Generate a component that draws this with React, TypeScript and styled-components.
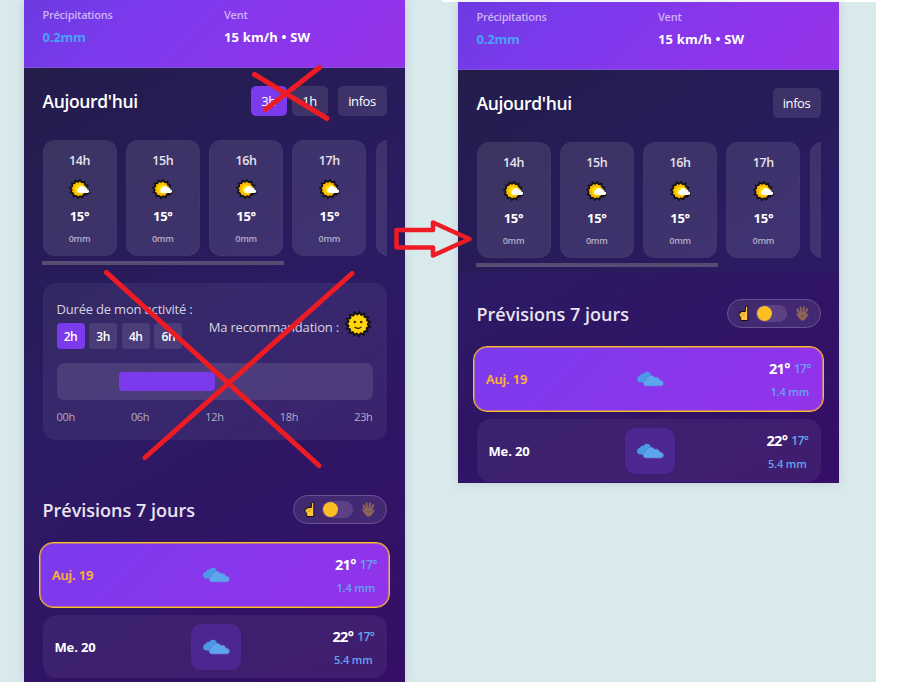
import React from 'react';
import styled, { createGlobalStyle, css } from 'styled-components';

const Global = createGlobalStyle`
  *, *::before, *::after { box-sizing: border-box; }
  body { margin: 0; background: #fff; font-family: 'Open Sans', 'Noto Sans', sans-serif; }
  button { font-family: inherit; padding: 0; border: 0; }
`;

const Page = styled.main`
  position: relative;
  width: 897px;
  height: 682px;
  overflow: hidden;
  background: linear-gradient(#fff, #fff) 442px 0 / 434px 2px no-repeat,
    linear-gradient(90deg, #d9eaed 876px, #fff 876px);
  display: flex;
  align-items: flex-start;
  gap: 53px;
  padding-left: 24px;
`;

const Phone = styled.section<{ $short?: boolean }>`
  width: 381px;
  height: ${p => (p.$short ? 481 : 682)}px;
  margin-top: ${p => (p.$short ? 2 : 0)}px;
  overflow: hidden;
  flex: none;
  display: flex;
  flex-direction: column;
  box-shadow: 0 0 9px rgba(80, 60, 90, 0.17);
`;

const Summary = styled.header`
  height: 68px;
  flex: none;
  display: grid;
  grid-template-columns: 181.5px 1fr;
  padding: 7px 0 0 18.5px;
  background: linear-gradient(135deg, #6b3ae0 0%, #7c3aed 28%, #9333ea 88%);
  border-bottom: 1px solid #8253d8;
`;

const Metric = styled.div`
  display: flex;
  flex-direction: column;
`;

const MetricLabel = styled.span`
  font-size: 11px;
  line-height: 16px;
  font-weight: 600;
  letter-spacing: -0.25px;
  color: #cdb2f7;
`;

const MetricValue = styled.span<{ $rain?: boolean }>`
  margin-top: 5px;
  font-size: 13px;
  line-height: 18px;
  font-weight: 700;
  letter-spacing: ${p => (p.$rain ? -0.2 : 0.15)}px;
  color: ${p => (p.$rain ? '#4ca0fa' : '#fff')};
`;

const backdrop = css`
  background-image: linear-gradient(150deg, #231d4b 0%, #2b1b63 45%, #350e67 100%);
  background-size: 381px 614px;
`;

const Hourly = styled.div<{ $short?: boolean }>`
  ${backdrop}
  height: ${p => (p.$short ? 203 : 215)}px;
  flex: none;
  padding: 18px 18.5px 0;
`;

const SectionHead = styled.div`
  height: 30px;
  display: flex;
  align-items: center;
  justify-content: space-between;
`;

const Title = styled.h2<{ $soft?: boolean }>`
  margin: 0;
  font-size: ${p => (p.$soft ? 18 : 17.5)}px;
  line-height: 26px;
  font-weight: 600;
  letter-spacing: ${p => (p.$soft ? 0 : -0.35)}px;
  color: ${p => (p.$soft ? '#e9e4f0' : '#fff')};
`;

const Actions = styled.div`
  display: flex;
  gap: 5px;
`;

const Tab = styled.button<{ $on?: boolean; $wide?: boolean; $narrow?: boolean }>`
  width: ${p => (p.$narrow ? 48 : p.$wide ? 49 : 36)}px;
  height: 30px;
  margin-left: ${p => (p.$wide ? 5 : 0)}px;
  border-radius: 5px;
  background: ${p => (p.$on ? '#7c3aed' : 'rgba(255,255,255,.1)')};
  color: #fff;
  font-size: 13px;
  letter-spacing: -0.4px;
  line-height: 28px;
`;

const Strip = styled.div`
  margin-top: 24px;
  height: 116px;
  width: 344px;
  overflow: hidden;
  display: flex;
  gap: 9.3px;
`;

const HourCard = styled.article`
  flex: none;
  width: 74px;
  height: 116px;
  border-radius: 12px;
  background: rgba(255, 255, 255, 0.1);
  border: 1px solid rgba(255, 255, 255, 0.02);
  display: flex;
  flex-direction: column;
  align-items: center;
  color: #fff;
`;

const Hour = styled.span`
  margin-top: 10px;
  font-size: 12.5px;
  line-height: 20px;
  font-weight: 600;
  letter-spacing: -0.4px;
  color: #e6e2ee;
`;

const HourIcon = styled.svg`
  width: 22px;
  height: 22px;
  margin: 8px 0 0 1px;
`;

const HourTemp = styled.span`
  margin-top: 5px;
  font-size: 13px;
  line-height: 20px;
  font-weight: 700;
  letter-spacing: -0.3px;
`;

const HourRain = styled.span`
  margin-top: 6px;
  font-size: 9px;
  line-height: 14px;
  font-weight: 600;
  letter-spacing: -0.2px;
  color: #b5aec8;
`;

const Scrollbar = styled.div`
  width: 242px;
  height: 4px;
  margin: 5px 0 0 -0.5px;
  background: #584c74;
`;

const ActivityWrap = styled.div`
  ${backdrop}
  background-position: 0 -215px;
  height: 204px;
  padding: 0 18.5px;
  flex: none;
`;

const Activity = styled.div`
  height: 157px;
  border-radius: 13px;
  background: rgba(255, 255, 255, 0.06);
  padding: 16px 14px 0;
`;

const ActivityTop = styled.div`
  display: flex;
  justify-content: space-between;
`;

const Caption = styled.div`
  font-size: 13px;
  line-height: 20px;
  letter-spacing: -0.19px;
  color: #d8d3e2;
  white-space: nowrap;
`;

const Durations = styled.div`
  display: flex;
  gap: 4.6px;
  margin-top: 4px;
`;

const Duration = styled.button<{ $on?: boolean }>`
  width: 28px;
  height: 26px;
  border-radius: 4px;
  background: ${p => (p.$on ? '#7c3aed' : 'rgba(255,255,255,.1)')};
  color: #fff;
  font-size: 12px;
  font-weight: 600;
  letter-spacing: -0.5px;
`;

const Advice = styled.div`
  display: flex;
  align-items: center;
  height: 30px;
  margin: 13px 0.5px 0 0;
  gap: 5px;
`;

const Face = styled.svg`
  width: 28px;
  height: 28px;
  margin-top: -6px;
`;

const Track = styled.div`
  height: 37px;
  margin-top: 14px;
  border-radius: 7px;
  background: rgba(255, 255, 255, 0.1);
  padding: 9px 0 0 62.5px;
`;

const Span = styled.div`
  width: 96px;
  height: 19px;
  border-radius: 4px;
  background: #7c3aed;
`;

const Scale = styled.div`
  display: flex;
  justify-content: space-between;
  margin-top: 9px;
  font-size: 11px;
  line-height: 16px;
  letter-spacing: -0.35px;
  color: #b3abc6;
`;

const Week = styled.div<{ $short?: boolean }>`
  ${backdrop}
  background-position: 0 ${p => (p.$short ? -401 : -419)}px;
  flex: 1;
  padding: ${p => (p.$short ? 25.5 : 7.5)}px 15px 0;
`;

const WeekHead = styled(SectionHead)`
  padding: 0 3.5px;
`;

const HandToggle = styled.div`
  width: 94px;
  height: 29px;
  border: 1px solid #6b5192;
  border-radius: 15px;
  background: rgba(255, 255, 255, 0.09);
  display: flex;
  align-items: center;
  padding-left: 9px;
`;

const Switch = styled.span`
  width: 31px;
  height: 17px;
  border-radius: 9px;
  background: #5c4285;
  margin: 0 8px 0 5px;
  padding: 1px 1.5px;
  display: block;
`;

const Knob = styled.span`
  display: block;
  width: 15px;
  height: 15px;
  border-radius: 50%;
  background: #fbbf24;
`;

const Hand = styled.svg`
  width: 14px;
  height: 17px;
  flex: none;
`;

const Day = styled.article<{ $today?: boolean }>`
  display: grid;
  grid-template-columns: 1fr 50px 1fr;
  align-items: center;
  height: ${p => (p.$today ? 66 : 63)}px;
  margin: ${p => (p.$today ? '17px 0 0' : '7.5px 3.5px 0')};
  padding: ${p => (p.$today ? '0 12px 0 12px' : '0 12px')};
  border: ${p => (p.$today ? '1px solid #fbbf24' : '0')};
  box-shadow: ${p => (p.$today ? 'inset 0 0 0 1px rgba(251, 191, 36, 0.45)' : 'none')};
  border-radius: 14px;
  background: ${p => (p.$today ? 'linear-gradient(135deg,#7c3aed,#9333ea)' : 'rgba(255,255,255,.06)')};
`;

const DayName = styled.span<{ $today?: boolean }>`
  font-size: 13px;
  font-weight: ${p => (p.$today ? 600 : 700)};
  letter-spacing: ${p => (p.$today ? -0.15 : -0.15)}px;
  color: ${p => (p.$today ? '#fbb927' : '#fff')};
  -webkit-text-stroke: ${p => (p.$today ? '0.2px' : '0')};
`;

const IconTile = styled.div<{ $today?: boolean }>`
  width: 50px;
  height: 46px;
  margin-left: 1px;
  border-radius: 10px;
  background: ${p => (p.$today ? 'transparent' : '#4c278f')};
  display: grid;
  place-items: center;
`;

const CloudIcon = styled.svg`
  width: 28px;
  height: 16px;
`;

const Figures = styled.div`
  display: flex;
  flex-direction: column;
  align-items: flex-end;
  padding-top: 1px;
`;

const Temps = styled.div`
  display: flex;
  gap: 4px;
  line-height: 20px;
`;

const High = styled.span`
  font-size: 14.5px;
  font-weight: 700;
  letter-spacing: -0.75px;
  color: #fff;
`;

const Low = styled.span`
  font-size: 12px;
  font-weight: 600;
  line-height: 19px;
  letter-spacing: -0.5px;
  color: #62a5ee;
`;

const Rain = styled.span`
  margin: 5px 2px 0 0;
  font-size: 11px;
  line-height: 16px;
  font-weight: 600;
  letter-spacing: -0.15px;
  color: #62a5ee;
`;

const Markup = styled.svg`
  position: absolute;
  left: 0;
  top: 0;
  width: 897px;
  height: 682px;
  pointer-events: none;
`;

const star = (c: number, outer: number, inner: number, n: number) =>
  Array.from({ length: n * 2 }, (_, i) => {
    const r = i % 2 ? inner : outer;
    const a = (Math.PI * i) / n - Math.PI / 2 + 0.13;
    return `${(c + r * Math.cos(a)).toFixed(2)},${(c + r * Math.sin(a)).toFixed(2)}`;
  }).join(' ');

const SunCloud = () => (
  <HourIcon viewBox="0 0 22 22">
    <polygon points={star(10, 9.2, 6.9, 12)} fill="#ffb900" stroke="#111" strokeWidth="1.6" />
    <path d="M13 15V6.6c1.300-.2 2 .4 2.500 1.500 2.200 0 3.300 1.300 3.500 2.300 2.600.6 2.400 4.600-.4 4.600z" fill="#111" />
    <circle cx="10" cy="10" r="6.6" fill="#ffb900" />
    <circle cx="10.5" cy="10" r="4.6" fill="#ffe000" />
    <path d="M10.2 14a2.700 2.700 0 0 1-.1-5.200c1.300-2.500 4.300-2.200 5.200-.4 2-.2 3 .8 3.200 2.100 2.300.3 2.300 3.500-.1 3.500z" fill="#fff" />
  </HourIcon>
);

const SunFace = () => (
  <Face viewBox="0 0 28 28">
    <polygon points={star(14, 12.2, 9.4, 15)} fill="#ffc400" stroke="#111" strokeWidth="1.8" />
    <circle cx="14" cy="14" r="8.8" fill="#ffd60a" />
    <circle cx="10.8" cy="12" r="1.3" fill="#3c2a09" />
    <circle cx="17.2" cy="12" r="1.3" fill="#3c2a09" />
    <path d="M11 17.2q3 2.6 6 0" fill="none" stroke="#3c2a09" strokeWidth="1.3" strokeLinecap="round" />
  </Face>
);

const Clouds = () => (
  <CloudIcon viewBox="0 0 28 16">
    <path d="M4.5 11.5C.3 11.4-.3 5.8 4.2 4.5 5 2.8 6.4 2.6 7.4 2.9 9.4-.3 13.9.4 14.8 3.6L16 11.5z" fill="#4a9be6" />
    <path d="M10 15C6.2 15 6.3 9.3 9.6 8.6 10.5 4.2 16.5 2.8 18.8 6.4c2.6-.8 4.4.4 4.8 2.5 4.8 0 5.1 6.1.9 6.1z" fill="#5ba6ec" stroke="#7069dc" strokeWidth=".7" />
  </CloudIcon>
);

const Finger = () => (
  <Hand viewBox="0 0 14 17">
    <path d="M8.4 1.500 10.800 1v14.500H3.700v-3L2 10.300V8h1.700V6.500h4.700z" fill="#ffc53b" stroke="#17120e" strokeWidth="1" strokeLinejoin="round" />
    <path d="M4.300 8.500h3.700M4.300 10.600h3.700" stroke="#c8862a" strokeWidth=".6" />
  </Hand>
);

const Palm = () => (
  <Hand viewBox="0 0 14 17">
    <path d="M4.6 9.5 2.5 4.5M6.2 8.5 5.5 2.5M8.2 8.5l.8-6M10 9.3l2-5" fill="none" stroke="#8f6658" strokeWidth="2" strokeLinecap="round" />
    <path d="M4 7.500h6.500l.6 2.200 2-1.200.5.900-3.500 5-1.300 1.100H6.200L3 11.800.8 8.800l.8-.6L4 9.800z" fill="#8f6658" />
    <path d="m5 10.800 4.300-.6M7 13l2-1.600" stroke="#65463e" strokeWidth=".6" />
  </Hand>
);

const hours = ['14h', '15h', '16h', '17h'];

const days = [
  { name: 'Auj. 19', high: '21°', low: '17°', rain: '1.4 mm', today: true },
  { name: 'Me. 20', high: '22°', low: '17°', rain: '5.4 mm', today: false },
];

const ActivityPanel = () => (
  <ActivityWrap>
    <Activity>
      <ActivityTop>
        <div>
          <Caption>Durée de mon activité :</Caption>
          <Durations>
            {['2h', '3h', '4h', '6h'].map((d, i) => (
              <Duration key={d} $on={i === 0}>{d}</Duration>
            ))}
          </Durations>
        </div>
        <Advice>
          <Caption>Ma recommandation :</Caption>
          <SunFace />
        </Advice>
      </ActivityTop>
      <Track><Span /></Track>
      <Scale>
        {['00h', '06h', '12h', '18h', '23h'].map(t => <span key={t}>{t}</span>)}
      </Scale>
    </Activity>
  </ActivityWrap>
);

const Weather = ({ short = false }: { short?: boolean }) => (
  <Phone $short={short}>
    <Summary>
      <Metric>
        <MetricLabel>Précipitations</MetricLabel>
        <MetricValue $rain>0.2mm</MetricValue>
      </Metric>
      <Metric>
        <MetricLabel>Vent</MetricLabel>
        <MetricValue>15 km/h • SW</MetricValue>
      </Metric>
    </Summary>
    <Hourly $short={short}>
      <SectionHead>
        <Title>Aujourd'hui</Title>
        <Actions>
          {!short && <Tab $on>3h</Tab>}
          {!short && <Tab>1h</Tab>}
          <Tab $wide $narrow={short}>infos</Tab>
        </Actions>
      </SectionHead>
      <Strip>
        {hours.map(h => (
          <HourCard key={h}>
            <Hour>{h}</Hour>
            <SunCloud />
            <HourTemp>15°</HourTemp>
            <HourRain>0mm</HourRain>
          </HourCard>
        ))}
        <HourCard />
      </Strip>
      <Scrollbar />
    </Hourly>
    {!short && <ActivityPanel />}
    <Week $short={short}>
      <WeekHead>
        <Title $soft>Prévisions 7 jours</Title>
        <HandToggle>
          <Finger />
          <Switch><Knob /></Switch>
          <Palm />
        </HandToggle>
      </WeekHead>
      {days.map(d => (
        <Day key={d.name} $today={d.today}>
          <DayName $today={d.today}>{d.name}</DayName>
          <IconTile $today={d.today}><Clouds /></IconTile>
          <Figures>
            <Temps>
              <High>{d.high}</High>
              <Low>{d.low}</Low>
            </Temps>
            <Rain>{d.rain}</Rain>
          </Figures>
        </Day>
      ))}
    </Week>
  </Phone>
);

export default function App() {
  return (
    <>
      <Global />
      <Page>
        <Weather />
        <Weather short />
        <Markup viewBox="0 0 897 682" fill="none" stroke="#ed1c24" strokeWidth="5" strokeLinecap="round" strokeLinejoin="round">
          <path d="M254.500 74.500 327 118.500M265.500 109.500 319.500 67.500" />
          <path d="M106.500 272.500 319 465.500M352 273.500 145 457.500" />
          <path d="M396.500 230H433V222.500L469.500 239 433 255.500V247.500H396.500Z" strokeWidth="4.500" />
        </Markup>
      </Page>
    </>
  );
}
